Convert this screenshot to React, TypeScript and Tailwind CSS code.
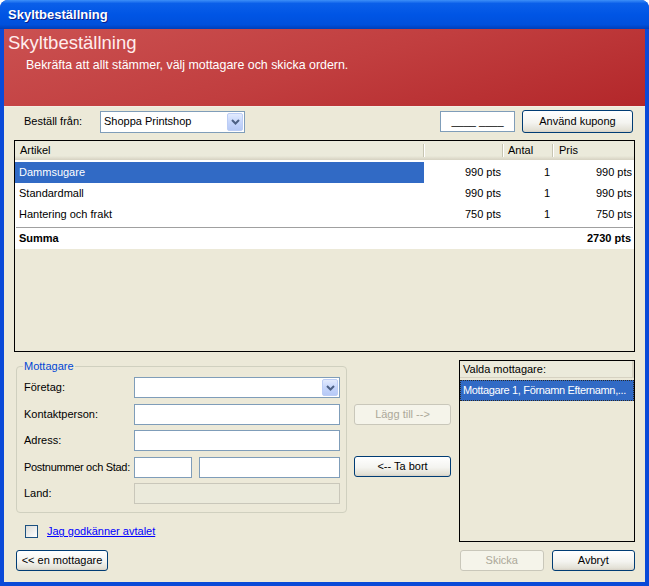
import clsx from "clsx";

function Chevron() {
  return (
    <svg width="9" height="6" viewBox="0 0 9 6" fill="none">
      <path d="M1 1 L4.5 4.5 L8 1" stroke="#4d6185" strokeWidth="2" />
    </svg>
  );
}

function Combo({ value, className }: { value?: string; className?: string }) {
  return (
    <div
      className={clsx(
        "flex items-center border border-[#7f9db9] bg-white pl-[3px] pr-[1px]",
        className
      )}
    >
      <span className="flex-1 truncate">{value}</span>
      <span className="flex h-[calc(100%-2px)] w-[16px] items-center justify-center rounded-[2px] border border-[#bccdf5] bg-[linear-gradient(to_bottom,#e3ebfe,#c6d6fb_50%,#b6c9f6)]">
        <Chevron />
      </span>
    </div>
  );
}

function TextBox({ className, children }: { className?: string; children?: React.ReactNode }) {
  return (
    <div className={clsx("border border-[#7f9db9] bg-white", className)}>{children}</div>
  );
}

function XpButton({
  children,
  disabled,
  className,
}: {
  children: React.ReactNode;
  disabled?: boolean;
  className?: string;
}) {
  return (
    <button
      disabled={disabled}
      className={clsx(
        "flex items-center justify-center rounded-[3px] border text-[11px]",
        disabled
          ? "border-[#c9c7ba] bg-[#f5f4ea] text-[#aca899]"
          : "border-[#003c74] bg-[linear-gradient(to_bottom,#ffffff,#f4f4f0_55%,#e3e1d6_90%,#d6d0c5)] text-black",
        className
      )}
    >
      {children}
    </button>
  );
}

const items = [
  { name: "Dammsugare", price: "990 pts", qty: "1", total: "990 pts", selected: true },
  { name: "Standardmall", price: "990 pts", qty: "1", total: "990 pts" },
  { name: "Hantering och frakt", price: "750 pts", qty: "1", total: "750 pts" },
];

function HeaderSep() {
  return <span className="h-[13px] w-[1px] bg-[#c7c5b2] shadow-[1px_0_0_#ffffff]" />;
}

export default function App() {
  return (
    <div className="flex h-[586px] w-[649px] flex-col overflow-hidden rounded-t-[8px] bg-[#0841d4] font-['Liberation_Sans',Arial,sans-serif] text-[11px] text-black">
      {/* Title bar */}
      <div className="flex h-[29px] shrink-0 items-center bg-[linear-gradient(to_bottom,#3d8ff8_0%,#0a5fe9_12%,#0055e5_50%,#0050dc_85%,#003fb8_100%)] pl-[8px]">
        <span className="text-[13px] font-bold text-white [text-shadow:1px_1px_#0a1e8c]">
          Skyltbeställning
        </span>
      </div>

      {/* Body */}
      <div className="flex flex-1 flex-col border-x-[4px] border-b-[4px] border-[#0a4ad8] bg-[#ece9d8]">
        {/* Banner */}
        <div className="h-[78px] shrink-0 border-b border-[#f3ede4] bg-[linear-gradient(165deg,#cb5151_0%,#c13e3f_50%,#b3272a_100%)] pt-[3px]">
          <div className="pl-[4px] text-[18.5px] leading-[22px] text-[#ffeded]">Skyltbeställning</div>
          <div className="mt-[3px] pl-[22px] text-[12.4px] leading-[16px] text-white">
            Bekräfta att allt stämmer, välj mottagare och skicka ordern.
          </div>
        </div>

        {/* Top row */}
        <div className="mt-[3px] flex h-[23px] items-center pl-[20px] pr-[12px]">
          <span className="w-[76px]">Beställ från:</span>
          <Combo value="Shoppa Printshop" className="h-[22px] w-[145px]" />
          <div className="flex-1" />
          <TextBox className="flex h-[21px] w-[75px] items-center justify-center">
            ____ ____
          </TextBox>
          <XpButton className="ml-[7px] h-[23px] w-[111px]">Använd kupong</XpButton>
        </div>

        {/* Article list */}
        <div className="mx-[10px] mt-[7px] flex h-[212px] shrink-0 flex-col border border-black bg-[#ece9d8]">
          <div className="flex h-[19px] shrink-0 items-center bg-[linear-gradient(to_bottom,#ebeadb_0%,#ebeadb_78%,#d6d2c2_100%)]">
            <span className="w-[408px] pl-[5px]">Artikel</span>
            <HeaderSep />
            <span className="w-[78px]" />
            <HeaderSep />
            <span className="w-[49px] pl-[5px]">Antal</span>
            <HeaderSep />
            <span className="pl-[6px]">Pris</span>
          </div>
          <div className="bg-white pt-[2px]">
            {items.map((it) => (
              <div key={it.name} className="flex h-[21px] items-center">
                <span
                  className={clsx(
                    "flex h-full w-[409px] items-center pl-[4px]",
                    it.selected && "bg-[#316ac5] text-white"
                  )}
                >
                  {it.name}
                </span>
                <span className="w-[80px] pr-[3px] text-right">{it.price}</span>
                <span className="w-[50px] pr-[4px] text-right">{it.qty}</span>
                <span className="w-[80px] pr-[2px] text-right">{it.total}</span>
              </div>
            ))}
            <div className="mx-[1px] mt-[2px] h-[1px] bg-[#a0a0a0]" />
            <div className="flex h-[21px] items-center font-bold">
              <span className="flex-1 pl-[4px]">Summa</span>
              <span className="pr-[3px]">2730 pts</span>
            </div>
          </div>
        </div>

        {/* Bottom area */}
        <div className="flex pl-[12px]">
          {/* Left column */}
          <div className="flex w-[331px] flex-col">
            <fieldset className="mt-[8px] rounded-[4px] border border-[#d0d0bf] pb-[8px] pl-[7px] pr-[6px]">
              <legend className="-ml-[1px] px-[1px] leading-[13px] text-[#0046d5]">Mottagare</legend>
              <div className="mt-[4px] flex h-[21px] items-center">
                <span className="w-[110px]">Företag:</span>
                <Combo className="h-[21px] w-[206px]" />
              </div>
              <div className="mt-[6px] flex h-[21px] items-center">
                <span className="w-[110px]">Kontaktperson:</span>
                <TextBox className="h-[21px] w-[206px]" />
              </div>
              <div className="mt-[5px] flex h-[21px] items-center">
                <span className="w-[110px]">Adress:</span>
                <TextBox className="h-[21px] w-[206px]" />
              </div>
              <div className="mt-[6px] flex h-[21px] items-center">
                <span className="w-[110px] whitespace-nowrap tracking-[-0.3px]">Postnummer och Stad:</span>
                <TextBox className="h-[21px] w-[58px]" />
                <TextBox className="ml-[7px] h-[21px] w-[141px]" />
              </div>
              <div className="mt-[5px] flex h-[21px] items-center">
                <span className="w-[110px]">Land:</span>
                <div className="h-[21px] w-[206px] border border-[#c9c7ba] bg-[#ebeadb]" />
              </div>
            </fieldset>
            <div className="mt-[12px] flex h-[13px] items-center pl-[9px]">
              <span className="h-[13px] w-[13px] border border-[#1c5180] bg-[linear-gradient(135deg,#dcdcd7,#ffffff)]" />
              <span className="ml-[9px] text-[#0000ff] underline">Jag godkänner avtalet</span>
            </div>
            <XpButton className="mt-[12px] h-[21px] w-[92px]">&lt;&lt; en mottagare</XpButton>
          </div>

          {/* Middle column */}
          <div className="ml-[7px] flex w-[97px] flex-col">
            <XpButton disabled className="mt-[52px] h-[21px] w-full">
              Lägg till --&gt;
            </XpButton>
            <XpButton className="mt-[31px] h-[21px] w-full">&lt;-- Ta bort</XpButton>
          </div>

          {/* Right column */}
          <div className="ml-[8px] flex w-[176px] flex-col">
            <div className="mt-[8px] flex h-[182px] flex-col border border-black bg-[#ece9d8]">
              <div className="flex h-[17px] shrink-0 items-center border-b border-[#d6d2c2] bg-[#ebeadb] pl-[3px] shadow-[inset_-2px_0_0_#d6d2c2]">
                Valda mottagare:
              </div>
              <div className="mt-[2px] flex h-[21px] items-center overflow-hidden whitespace-nowrap border border-dotted border-[#2a2a2a] bg-[#316ac5] pl-[2px] tracking-[-0.35px] text-white">
                Mottagare 1, Förnamn Efternamn,...
              </div>
            </div>
            <div className="mt-[8px] flex gap-[8px] pl-[1px]">
              <XpButton disabled className="h-[21px] w-[84px]">
                Skicka
              </XpButton>
              <XpButton className="h-[21px] w-[84px]">Avbryt</XpButton>
            </div>
          </div>
        </div>
      </div>
    </div>
  );
}
